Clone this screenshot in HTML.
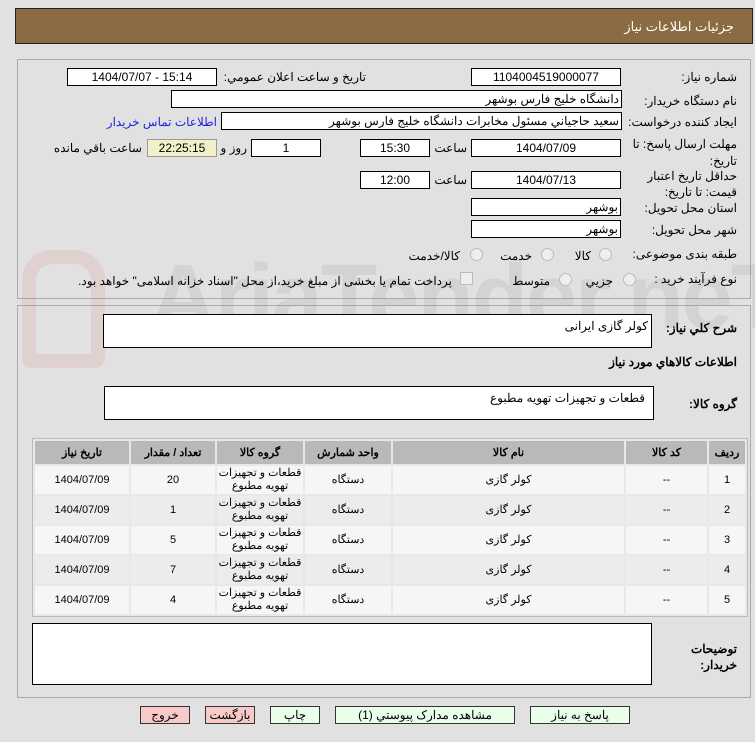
<!DOCTYPE html>
<html><head><meta charset="utf-8"><style>
body{margin:0;width:755px;height:742px;background:#e1e1e1;font-family:"Liberation Sans","Noto Sans CJK SC",sans-serif;font-size:12px;color:#000;position:relative;overflow:hidden}
.a{position:absolute}
.hdr{left:15px;top:8px;width:736px;height:34px;background:#8b6b41;border:1px solid #222}
.hdr span{position:absolute;right:18px;top:10px;color:#fff;font-size:13px}
.pan{border:1px solid #aaa}
.f{position:absolute;background:#fff;border:1px solid #000;height:16px;line-height:16px;font-size:12px;text-align:center;box-sizing:content-box;white-space:nowrap;overflow:hidden}
.r{text-align:right;padding-right:2px}
.l{position:absolute;font-size:12px;direction:rtl;white-space:nowrap}
.rad{position:absolute;width:11px;height:11px;border:1px solid #bbb;border-radius:50%;background:#eee}
table{position:absolute;left:32px;top:438px;width:716px;table-layout:fixed;border-collapse:separate;border-spacing:2px;background:#e8e8e8;border:1px solid #bbb;direction:rtl;font-size:11px}
th{background:#b9b9b9;height:23px;font-weight:bold;padding:0}
td{height:28px;padding:0;text-align:center;line-height:13px}
tr.o td{background:#f6f6f6} tr.e td{background:#ececec}
.btn{position:absolute;top:706px;height:16px;line-height:16px;border:1px solid #333;text-align:center;font-size:12px}
.wm{position:absolute;left:150px;top:245px;font-size:92px;font-weight:bold;color:rgba(150,150,150,.18);font-family:"Liberation Sans",sans-serif;letter-spacing:-2px}
</style></head><body>
<div class="a hdr"><span>جزئيات اطلاعات نياز</span></div>
<div class="a pan" style="left:17px;top:59px;width:732px;height:238px"></div>
<div class="a pan" style="left:17px;top:305px;width:732px;height:391px"></div>
<div class="wm">AriaTender.neT</div>
<div class="a" style="left:22px;top:250px;width:55px;height:90px;border:14px solid rgba(220,120,120,.15);border-radius:30px 30px 10px 10px"></div>

<div class="l" style="right:18px;top:70px">شماره نياز:</div>
<div class="f" style="left:471px;top:68px;width:148px">1104004519000077</div>
<div class="l" style="right:389px;top:70px">تاريخ و ساعت اعلان عمومي:</div>
<div class="f" style="left:67px;top:68px;width:148px">1404/07/07 - 15:14</div>

<div class="l" style="right:18px;top:94px">نام دستگاه خريدار:</div>
<div class="f r" style="left:171px;top:90px;width:447px">دانشگاه خليج فارس بوشهر</div>

<div class="l" style="right:18px;top:115px">ايجاد کننده درخواست:</div>
<div class="f r" style="left:221px;top:112px;width:397px">سعيد حاجياني مسئول مخابرات دانشگاه خليج فارس بوشهر</div>
<div class="l" style="right:538px;top:115px;color:#2222dd">اطلاعات تماس خريدار</div>

<div class="l" style="right:18px;top:136px;line-height:17px;white-space:normal;width:120px;text-align:right">مهلت ارسال پاسخ: تا تاريخ:</div>
<div class="f" style="left:471px;top:139px;width:148px">1404/07/09</div>
<div class="l" style="right:288px;top:141px">ساعت</div>
<div class="f" style="left:360px;top:139px;width:68px">15:30</div>
<div class="f" style="left:251px;top:139px;width:68px">1</div>
<div class="l" style="right:508px;top:141px">روز و</div>
<div class="f" style="left:147px;top:139px;width:68px;background:#f2f0c8;border-color:#999">22:25:15</div>
<div class="l" style="right:613px;top:141px">ساعت باقي مانده</div>

<div class="l" style="right:18px;top:168px;line-height:16px;white-space:normal;width:110px;text-align:right">حداقل تاريخ اعتبار قيمت: تا تاريخ:</div>
<div class="f" style="left:471px;top:171px;width:148px">1404/07/13</div>
<div class="l" style="right:288px;top:173px">ساعت</div>
<div class="f" style="left:360px;top:171px;width:68px">12:00</div>

<div class="l" style="right:18px;top:201px">استان محل تحويل:</div>
<div class="f r" style="left:471px;top:198px;width:146px">بوشهر</div>
<div class="l" style="right:18px;top:223px">شهر محل تحويل:</div>
<div class="f r" style="left:471px;top:220px;width:146px">بوشهر</div>

<div class="l" style="right:18px;top:247px">طبقه بندی موضوعی:</div>
<div class="rad" style="left:599px;top:248px"></div><div class="l" style="right:164px;top:249px">کالا</div>
<div class="rad" style="left:541px;top:248px"></div><div class="l" style="right:223px;top:249px">خدمت</div>
<div class="rad" style="left:470px;top:248px"></div><div class="l" style="right:295px;top:249px">کالا/خدمت</div>

<div class="l" style="right:18px;top:272px">نوع فرآيند خريد :</div>
<div class="rad" style="left:623px;top:273px"></div><div class="l" style="right:142px;top:274px">جزيي</div>
<div class="rad" style="left:559px;top:273px"></div><div class="l" style="right:205px;top:274px">متوسط</div>
<div class="a" style="left:460px;top:272px;width:11px;height:11px;border:1px solid #bbb;background:#eee"></div>
<div class="l" style="right:303px;top:274px">پرداخت تمام يا بخشی از مبلغ خريد،از محل "اسناد خزانه اسلامی" خواهد بود.</div>

<div class="l" style="right:18px;top:321px;font-weight:bold">شرح کلي نياز:</div>
<div class="f" style="left:103px;top:314px;width:547px;height:32px;line-height:22px;text-align:right"><span style="padding-right:3px">کولر گازی ایرانی</span></div>
<div class="l" style="right:18px;top:355px;font-weight:bold">اطلاعات کالاهاي مورد نياز</div>
<div class="l" style="right:18px;top:397px;font-weight:bold">گروه کالا:</div>
<div class="f" style="left:104px;top:386px;width:548px;height:32px;line-height:22px;text-align:right"><span style="padding-right:8px">قطعات و تجهیزات تهویه مطبوع</span></div>

<table>
<colgroup><col style="width:36px"><col style="width:81px"><col style="width:231px"><col style="width:86px"><col style="width:86px"><col style="width:84px"><col></colgroup>
<tr><th>رديف</th><th>کد کالا</th><th>نام کالا</th><th>واحد شمارش</th><th>گروه کالا</th><th>تعداد / مقدار</th><th>تاريخ نياز</th></tr>
<tr class="o"><td>1</td><td>--</td><td>کولر گازی</td><td>دستگاه</td><td>قطعات و تجهیزات<br>تهویه مطبوع</td><td>20</td><td>1404/07/09</td></tr>
<tr class="e"><td>2</td><td>--</td><td>کولر گازی</td><td>دستگاه</td><td>قطعات و تجهیزات<br>تهویه مطبوع</td><td>1</td><td>1404/07/09</td></tr>
<tr class="o"><td>3</td><td>--</td><td>کولر گازی</td><td>دستگاه</td><td>قطعات و تجهیزات<br>تهویه مطبوع</td><td>5</td><td>1404/07/09</td></tr>
<tr class="e"><td>4</td><td>--</td><td>کولر گازی</td><td>دستگاه</td><td>قطعات و تجهیزات<br>تهویه مطبوع</td><td>7</td><td>1404/07/09</td></tr>
<tr class="o"><td>5</td><td>--</td><td>کولر گازی</td><td>دستگاه</td><td>قطعات و تجهیزات<br>تهویه مطبوع</td><td>4</td><td>1404/07/09</td></tr>
</table>

<div class="f" style="left:32px;top:623px;width:618px;height:60px"></div>
<div class="l" style="right:18px;top:641px;font-weight:bold;line-height:16px">توضيحات<br>خريدار:</div>

<div class="btn" style="left:140px;width:48px;background:#f9c9c9">خروج</div>
<div class="btn" style="left:205px;width:48px;background:#f9c9c9">بازگشت</div>
<div class="btn" style="left:270px;width:48px;background:#eaffea">چاپ</div>
<div class="btn" style="left:335px;width:178px;background:#eaffea">مشاهده مدارک پيوستي (1)</div>
<div class="btn" style="left:530px;width:98px;background:#eaffea">پاسخ به نياز</div>
</body></html>
